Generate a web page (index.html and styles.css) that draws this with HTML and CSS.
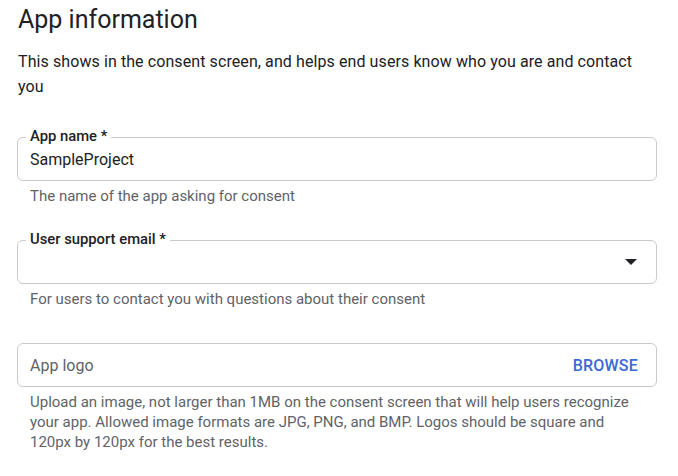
FILE: index.html
```html
<!DOCTYPE html>
<html>
<head>
<meta charset="utf-8">
<link rel="stylesheet" href="styles.css">
</head>
<body>
<div class="page">
  <h1 class="title">App information</h1>
  <p class="intro">This shows in the consent screen, and helps end users know who you are and contact you</p>

  <div class="group group-first">
    <div class="field">
      <span class="label">App name *</span>
      <span class="value">SampleProject</span>
    </div>
    <div class="hint">The name of the app asking for consent</div>
  </div>

  <div class="group">
    <div class="field">
      <span class="label">User support email *</span>
      <span class="value"></span>
      <svg class="arrow" width="12" height="6" viewBox="0 0 12 6"><path d="M0 0 L12 0 L6 6 Z" fill="#202124"/></svg>
    </div>
    <div class="hint">For users to contact you with questions about their consent</div>
  </div>

  <div class="group">
    <div class="field">
      <span class="placeholder">App logo</span>
      <span class="browse">BROWSE</span>
    </div>
    <div class="hint hint-long">Upload an image, not larger than 1MB on the consent screen that will help users recognize your app. Allowed image formats are JPG, PNG, and BMP. Logos should be square and 120px by 120px for the best results.</div>
  </div>
</div>
</body>
</html>
```

FILE: styles.css
```css
html, body {
  margin: 0;
  padding: 0;
  background: #ffffff;
}

body {
  font-family: Roboto, "Liberation Sans", sans-serif;
  color: #202124;
}

.page {
  width: 640px;
  padding-left: 17px;
}

.title {
  margin: 4px 0 0 1px;
  font-size: 25px;
  line-height: 32px;
  font-weight: 400;
  color: #202124;
}

.intro {
  margin: 13px 0 0 1px;
  font-size: 16px;
  line-height: 25px;
  letter-spacing: 0.09px;
  color: #202124;
}

.group {
  margin-top: 34px;
}

.group-first {
  margin-top: 38px;
}

.field {
  position: relative;
  box-sizing: border-box;
  height: 44px;
  border: 1px solid #cacaca;
  border-radius: 6px;
  display: flex;
  align-items: center;
  padding: 0 18px 0 12px;
}

.label {
  position: absolute;
  top: -12px;
  left: 8px;
  padding: 0 4px;
  background: #ffffff;
  font-size: 14.8px;
  line-height: 20px;
  font-weight: 500;
  color: #202124;
}

.value {
  flex: 1;
  font-size: 16px;
  line-height: 24px;
  color: #202124;
  padding-top: 2px;
}

.placeholder {
  flex: 1;
  font-size: 16px;
  line-height: 24px;
  color: #5f6368;
  padding-top: 2px;
}

.arrow {
  display: block;
  margin-right: 1px;
}

.browse {
  font-size: 16px;
  line-height: 24px;
  font-weight: 500;
  color: #3b69d6;
  letter-spacing: 0.2px;
  padding-top: 2px;
}

.hint {
  margin-top: 5px;
  padding: 0 20px 0 13px;
  font-size: 15px;
  line-height: 20px;
  color: #5f6368;
}
```
